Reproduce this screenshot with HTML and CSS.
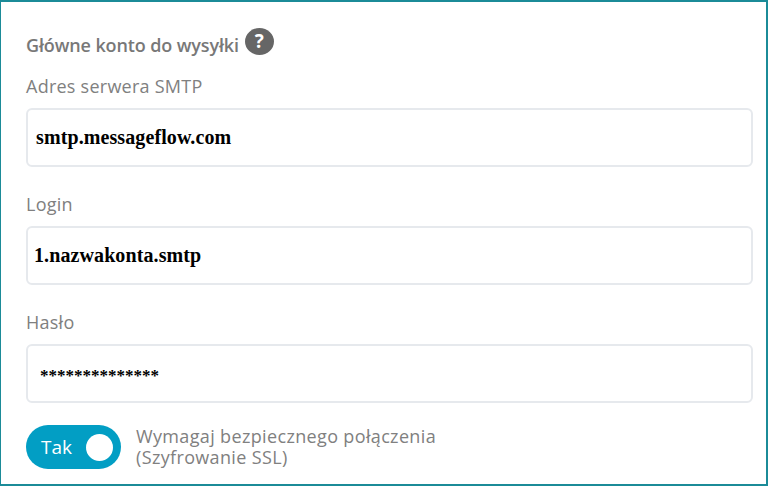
FILE: index.html
```html
<!DOCTYPE html>
<html lang="pl">
<head>
    <meta charset="UTF-8">
    <meta name="viewport" content="width=device-width, initial-scale=1.0">
    <title>Główne konto do wysyłki</title>
    <link rel="stylesheet" href="styles.css">
</head>
<body>
    <div class="panel">
        <div class="heading">
            <span class="heading-text">Główne konto do wysyłki</span>
            <span class="help">?</span>
        </div>

        <div class="field">
            <div class="label">Adres serwera SMTP</div>
            <div class="input value-host">smtp.messageflow.com</div>
        </div>
        <div class="field">
            <div class="label">Login</div>
            <div class="input value-login">1.nazwakonta.smtp</div>
        </div>
        <div class="field">
            <div class="label">Hasło</div>
            <div class="input value-pass">**************</div>
        </div>

        <div class="ssl">
            <div class="toggle">
                <span class="toggle-text">Tak</span>
                <span class="toggle-knob"></span>
            </div>
            <div class="ssl-text">Wymagaj bezpiecznego połączenia<br>(Szyfrowanie SSL)</div>
        </div>
    </div>
</body>
</html>
```

FILE: styles.css
```css
html, body {
    margin: 0;
    padding: 0;
}
body {
    width: 768px;
    height: 486px;
    overflow: hidden;
    background-color: #fff;
    font-family: "Open Sans", sans-serif;
    color: #808080;
}
.panel {
    box-sizing: border-box;
    width: 768px;
    height: 486px;
    padding: 26px 13px 0 25px;
    border: 2px solid #1b8b98;
    border-left-width: 1px;
}
.heading {
    display: flex;
    align-items: flex-start;
    height: 47px;
}
.heading-text {
    margin-top: 5px;
    font-size: 18px;
    line-height: 24px;
    font-weight: 600;
    letter-spacing: -0.12px;
    color: #787878;
}
.help {
    width: 29px;
    height: 27px;
    margin-left: 6px;
    border-radius: 50%;
    background-color: #666;
    color: #fff;
    font-size: 19px;
    line-height: 27px;
    font-weight: 700;
    text-align: center;
}
.field {
    margin-bottom: 26px;
}
.label {
    height: 22px;
    margin-bottom: 11px;
    font-size: 18px;
    line-height: 22px;
    letter-spacing: 0.25px;
}
.input {
    box-sizing: border-box;
    display: flex;
    align-items: center;
    height: 59px;
    border: 2px solid #e6e9ed;
    border-radius: 6px;
    font-family: "Liberation Serif", serif;
    font-weight: 700;
    font-size: 20px;
    letter-spacing: 0.1px;
    color: #000;
}
.value-host {
    padding-left: 8px;
}
.value-login {
    padding-left: 6px;
}
.value-pass {
    padding: 4px 0 0 12px;
    font-size: 17px;
    letter-spacing: 0;
}
.ssl {
    display: flex;
    align-items: center;
    margin-top: -4px;
}
.toggle {
    display: flex;
    align-items: center;
    justify-content: space-between;
    box-sizing: border-box;
    width: 95px;
    height: 44px;
    padding: 0 8px 0 15px;
    border-radius: 22px;
    background-color: #029ec4;
    color: #fff;
}
.toggle-text {
    font-size: 19px;
}
.toggle-knob {
    width: 27px;
    height: 27px;
    border-radius: 50%;
    background-color: #fff;
}
.ssl-text {
    margin-left: 15px;
    font-size: 18px;
    line-height: 21px;
    letter-spacing: 0.35px;
}
```
